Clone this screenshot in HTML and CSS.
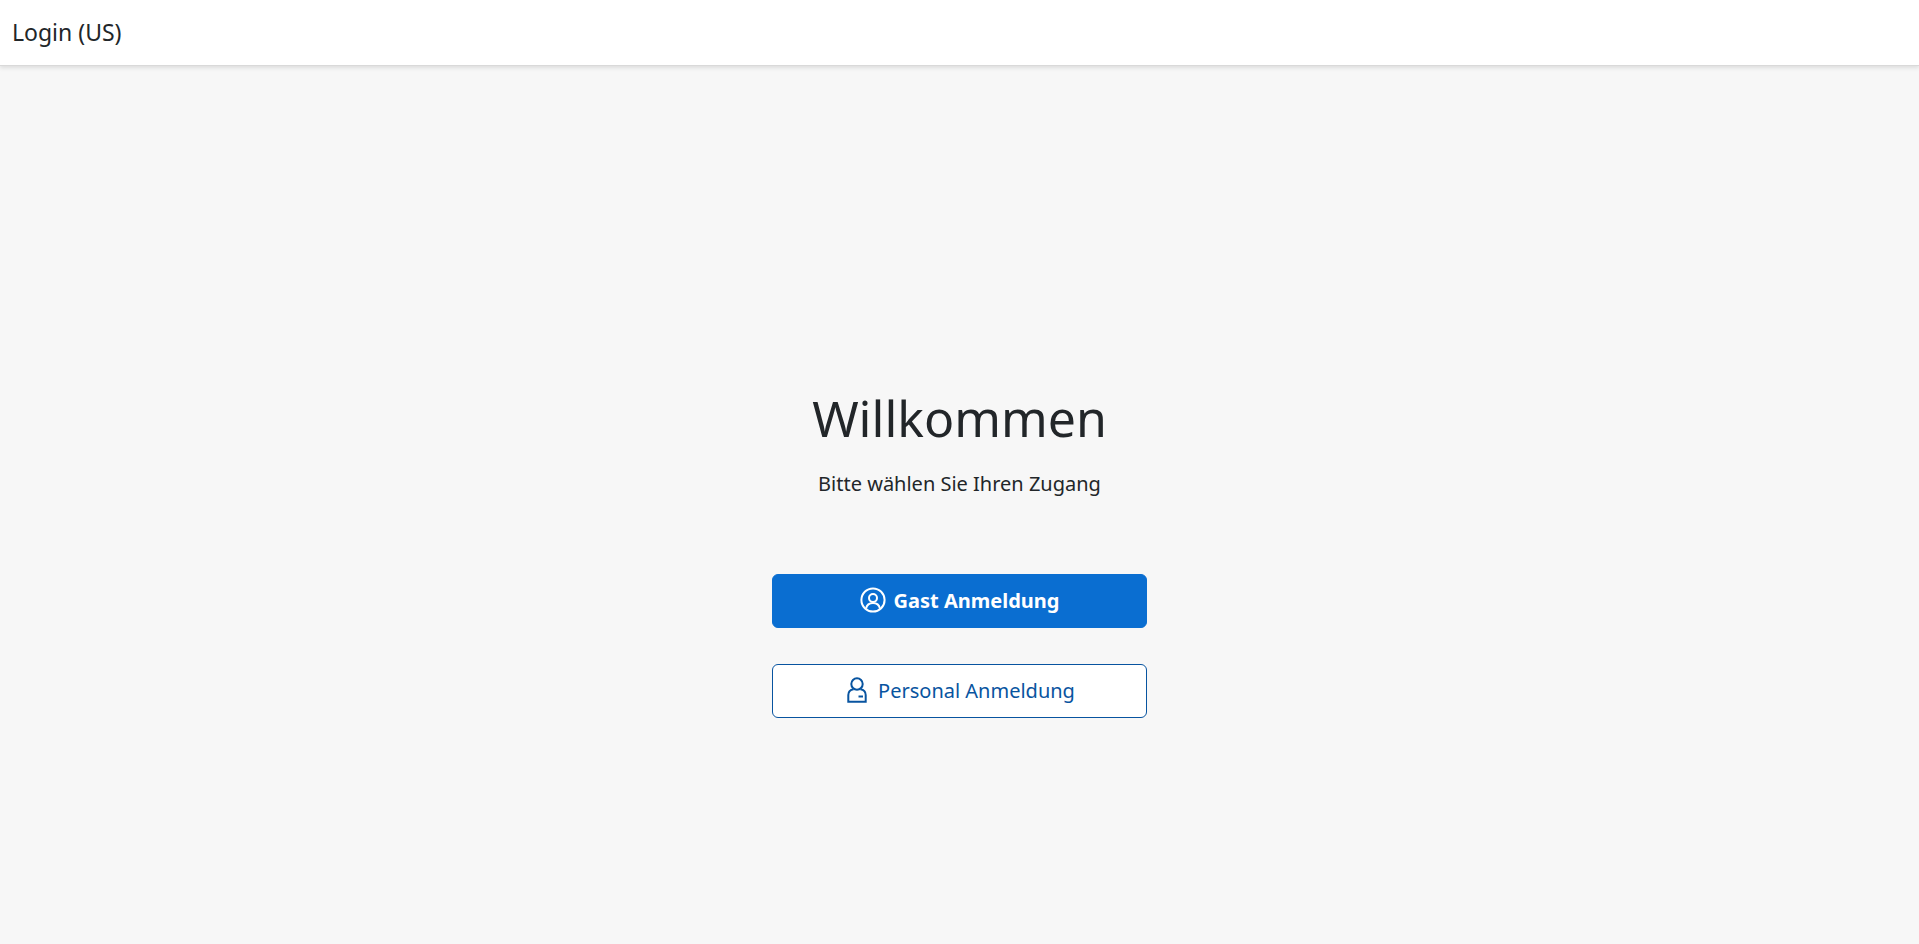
FILE: index.html
```
<!DOCTYPE html>
<html lang="de">
<head>
<meta charset="UTF-8">
<meta name="viewport" content="width=device-width, initial-scale=1">
<title>Login (US)</title>
<link rel="stylesheet" href="styles.css">
</head>
<body>
<header class="bar">
  <h1 class="bar-title">Login (US)</h1>
</header>
<main class="welcome">
  <h2 class="welcome-title">Willkommen</h2>
  <p class="welcome-text">Bitte wählen Sie Ihren Zugang</p>
  <div class="actions">
    <button type="button" class="btn btn-primary">
      <svg class="icon" viewBox="0 0 26 26" aria-hidden="true">
        <circle cx="13" cy="13" r="11.6"/>
        <circle cx="13" cy="11" r="4"/>
        <path d="M6 21.6c.8-3.6 3.4-5.600 7-5.600s6.200 2 7 5.600"/>
      </svg>
      <span>Gast Anmeldung</span>
    </button>
    <button type="button" class="btn btn-default">
      <svg class="icon" viewBox="0 0 26 26" aria-hidden="true">
        <circle cx="13" cy="7" r="5.7"/>
        <path d="M9.6 12.2C6 12.7 4.3 15 4.3 18v6.7h17.4V18c0-3-1.7-5.3-5.3-5.8"/>
        <path d="M14.5 19.5H19"/>
      </svg>
      <span>Personal Anmeldung</span>
    </button>
  </div>
</main>
</body>
</html>
```
FILE: styles.css
```
*, *:before, *:after{
  box-sizing: border-box;
}
body{
  margin: 0;
  min-height: 100vh;
  display: flex;
  flex-direction: column;
  background: #f7f7f7;
  color: #222629;
  font-family: 'Noto Sans', 'Liberation Sans', sans-serif;
  font-size: 20px;
}

/* header */
.bar{
  position: relative;
  display: flex;
  align-items: center;
  height: 66px;
  padding: 0 12px 2px;
  background: #fff;
  border-bottom: 1px solid #d9d9d9;
  box-shadow: 0 2px 4px rgba(34, 38, 41, 0.12);
}
.bar-title{
  margin: 0;
  font-size: 23px;
  font-weight: 400;
}

/* content */
.welcome{
  flex: 1;
  display: flex;
  flex-direction: column;
  justify-content: center;
  align-items: center;
  padding: 94px 16px 0;
  text-align: center;
}
.welcome-title{
  margin: 0 0 16px;
  font-size: 50px;
  line-height: 64px;
  font-weight: 400;
}
.welcome-text{
  margin: 0 0 72px;
  line-height: 36px;
}
.actions{
  display: flex;
  flex-direction: column;
  gap: 36px;
  width: 100%;
  max-width: 375px;
}

/* buttons */
.btn{
  display: flex;
  justify-content: center;
  align-items: center;
  gap: 8px;
  height: 54px;
  padding: 0 16px 2px;
  border: 1px solid;
  border-radius: 6px;
  font: inherit;
  cursor: pointer;
}
.btn-primary{
  background: #0a6ed1;
  border-color: #0a6ed1;
  color: #fff;
  font-weight: 700;
}
.btn-default{
  background: #fff;
  border-color: #0854a0;
  color: #0854a0;
}
.icon{
  width: 26px;
  height: 26px;
  fill: none;
  stroke: currentColor;
  stroke-width: 2;
}
```
